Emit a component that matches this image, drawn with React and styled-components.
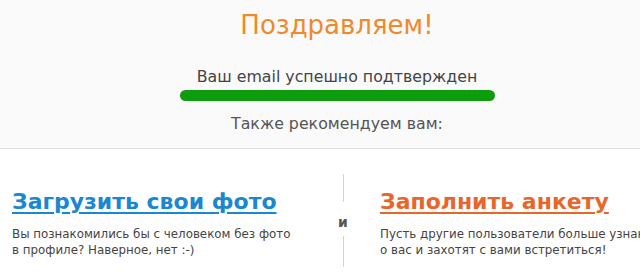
import React from "react";
import styled, { createGlobalStyle } from "styled-components";

const GlobalStyle = createGlobalStyle`
  html, body {
    margin: 0;
    padding: 0;
    overflow: hidden;
    background: #fff;
  }
  body {
    font-family: "DejaVu Sans", Verdana, sans-serif;
  }
`;

const Page = styled.div`
  width: 674px;
`;

const Header = styled.div`
  height: 149px;
  box-sizing: border-box;
  padding-top: 9px;
  background: #fafafa;
  border-bottom: 1px solid #e0e0e0;
  display: flex;
  flex-direction: column;
  align-items: center;
`;

const Title = styled.h1`
  margin: 0;
  font-size: 26px;
  line-height: 32px;
  font-weight: normal;
  color: #f0892b;
`;

const Confirmed = styled.div`
  margin-top: 26px;
  font-size: 15.8px;
  line-height: 20px;
  color: #444;
`;

const Bar = styled.div`
  margin-top: 3px;
  width: 315px;
  height: 11px;
  border-radius: 6px;
  background: #0c9c0c;
`;

const Recommend = styled.div`
  margin-top: 13px;
  font-size: 15.8px;
  line-height: 20px;
  color: #555;
`;

const Offers = styled.div`
  display: flex;
  align-items: flex-start;
  padding-top: 25px;
`;

const Offer = styled.div`
  width: ${(p) => p.$width}px;
  flex-shrink: 0;
  padding-left: ${(p) => p.$indent}px;
  padding-top: 15px;
`;

const OfferLink = styled.a`
  display: block;
  font-size: 22px;
  line-height: 26px;
  font-weight: bold;
  color: ${(p) => p.$color};
  text-decoration: underline;
  text-decoration-thickness: 2px;
  text-underline-offset: 3px;
  white-space: nowrap;
`;

const OfferText = styled.p`
  margin: 12px 0 0;
  font-size: 11.85px;
  line-height: 15.5px;
  color: #444;
  white-space: nowrap;
`;

const Divider = styled.div`
  width: 62px;
  flex-shrink: 0;
  display: flex;
  flex-direction: column;
  align-items: center;
`;

const Line = styled.div`
  width: 1px;
  height: ${(p) => p.$h}px;
  background: #d4d4d4;
`;

const And = styled.span`
  margin: 11px 0 5px;
  font-size: 14px;
  line-height: 18px;
  font-weight: bold;
  color: #555;
`;

export default function App() {
  return (
    <Page>
      <GlobalStyle />
      <Header>
        <Title>Поздравляем!</Title>
        <Confirmed>Ваш email успешно подтвержден</Confirmed>
        <Bar />
        <Recommend>Также рекомендуем вам:</Recommend>
      </Header>
      <Offers>
        <Offer $width={300} $indent={12}>
          <OfferLink href="#" $color="#1a87d0">
            Загрузить свои фото
          </OfferLink>
          <OfferText>
            Вы познакомились бы с человеком без фото
            <br />в профиле? Наверное, нет :-)
          </OfferText>
        </Offer>
        <Divider>
          <Line $h={28} />
          <And>и</And>
          <Line $h={31} />
        </Divider>
        <Offer $width={300} $indent={6}>
          <OfferLink href="#" $color="#e8652b">
            Заполнить анкету
          </OfferLink>
          <OfferText>
            Пусть другие пользователи больше узнают
            <br />о вас и захотят с вами встретиться!
          </OfferText>
        </Offer>
      </Offers>
    </Page>
  );
}
